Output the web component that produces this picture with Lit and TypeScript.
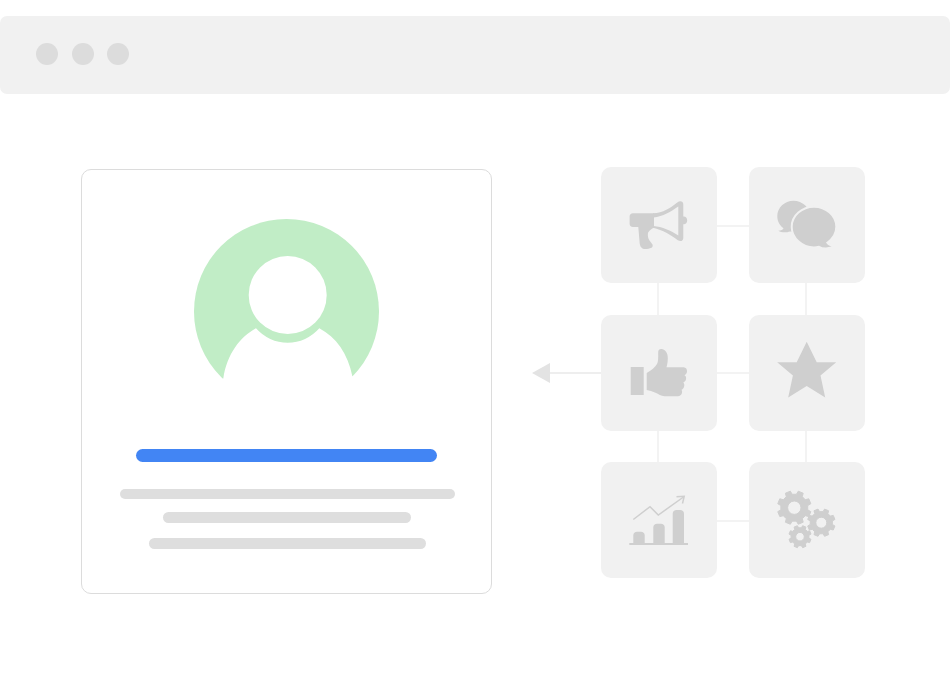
import { LitElement, html, css, svg } from "lit";
import { customElement } from "lit/decorators.js";

function gear(cx: number, cy: number, r: number, hole: number, teeth = 8): string {
  const root = r * 0.8;
  const step = (Math.PI * 2) / teeth;
  const pts: string[] = [];
  for (let i = 0; i < teeth; i++) {
    const a = i * step + step / 2;
    const list: [number, number][] = [
      [root, a - step * 0.3],
      [r, a - step * 0.2],
      [r, a + step * 0.2],
      [root, a + step * 0.3],
    ];
    for (const [rad, ang] of list) {
      pts.push(`${(cx + rad * Math.cos(ang)).toFixed(2)} ${(cy + rad * Math.sin(ang)).toFixed(2)}`);
    }
  }
  const ring = `M${pts.join("L")}Z`;
  const h = `M${cx - hole} ${cy}a${hole} ${hole} 0 1 0 ${hole * 2} 0a${hole} ${hole} 0 1 0 ${-hole * 2} 0Z`;
  return ring + h;
}

const icons = {
  megaphone: svg`
    <path d="M32 46.2H53V60.8C50.5 61.5 48.5 63.5 47 65.8C46.6 69 47 71.5 48.5 73.5L51.5 77.5C52 79 51.5 80 50.5 80.8C47 82.3 43.5 82.5 41.5 81.5C39.8 80.5 39 78.5 38.7 76.5L37.3 60H32C29.8 60 28.6 58.5 28.6 56.5V49.5C28.6 47.5 29.8 46.2 32 46.2Z"/>
    <path fill-rule="evenodd" d="M52 46.2C62 46 69.5 41 76.2 35.5C79 33.2 82.3 34 82.3 37.5V49.6C84.5 49.3 86.2 51 86.2 53.5S84.5 57.6 82.3 57.3V71C82.3 74.2 79.2 75 76.5 73C69.5 68 62 63 52 60.8ZM52.5 50.5V59C61 59.8 70 63.5 77.3 68.5V39.5C70 44.5 62 49.5 52.5 50.5Z"/>`,
  bubbles: svg`
    <path d="M44.5 33.7C35.5 33.7 28.3 40.6 28.3 49.2C28.3 54.5 31 58.7 34.5 61.2C34 62.5 32 63.5 29.3 63.8C32.5 65.8 38 65.5 41 64.4C42.3 64.7 43.4 64.8 44.5 64.8C53.5 64.8 61 57.8 61 49.2C61 40.6 53.5 33.7 44.5 33.7Z"/>
    <path stroke="#f1f1f1" stroke-width="2" d="M65 39.7C53 39.7 42.7 48.5 42.7 59.8C42.7 71 53 80.5 65 80.5C66.8 80.5 68.5 80.2 70 79.8C73.5 82.2 80 82.2 85.5 79.2C81.5 78.6 79.5 77.3 78.3 75.7C83.8 71.8 87.3 66.2 87.3 59.8C87.3 48.5 77 39.7 65 39.7Z"/>`,
  thumb: svg`
    <rect x="29.7" y="52" width="13" height="28"/>
    <path d="M45.7 58C50 55.5 54 52.5 56 49C57.5 46.5 57.2 41 57.2 37C57.2 34.5 59 33.5 61 34C64.5 34.8 66.8 38 66.8 43C66.8 46.5 66.3 49.5 65.5 52.3H82.5C85 52.3 86.2 54.5 86 56.5C85.8 58.3 85 59.5 83.5 60.3C85 61 85.3 62.5 85 64.3C84.7 66 83.5 67 82.3 67.5C83.5 68.5 83.5 70.5 83 72C82.5 73.5 81.5 74.5 80.5 74.8C81.3 76 81.2 77.5 80.8 78.5C80.3 80 79 81 77 81.2H63.5C60 81.2 57.5 79 54.5 77.8C51.5 76.5 48.5 75.5 45.7 75Z"/>`,
  star: svg`<path d="M57.7 26.7L67.7 47.3H87.2L71.5 60.5L76.2 82.5L57.7 71L39.2 82.5L43.9 60.5L28.2 47.3H47.7Z" stroke-linejoin="round"/>`,
  chart: svg`
    <rect x="28.3" y="81" width="58.7" height="2"/>
    <path d="M32.3 81V73C32.3 71 34 69.7 36 69.7H40C42 69.7 43.7 71 43.7 73V81Z"/>
    <path d="M52.3 81V65C52.3 63 54 61.7 56 61.7H60C62 61.7 63.7 63 63.7 65V81Z"/>
    <path d="M71.7 81V51.5C71.7 49.5 73.4 48 75.4 48H79.3C81.3 48 83 49.5 83 51.5V81Z"/>
    <path fill="none" stroke="#cfcfcf" stroke-width="1.5" d="M32.3 57.5L49 44.7L57.3 53L82.5 35"/>
    <path fill="none" stroke="#cfcfcf" stroke-width="1.5" d="M75.5 34.7L83.2 34.3L81.5 41.5"/>`,
  gears: svg`
    <path fill-rule="evenodd" stroke="#cfcfcf" stroke-width="1" stroke-linejoin="round" d=${gear(45.3, 45.7, 17, 6.7)}/>
    <path fill-rule="evenodd" stroke="#cfcfcf" stroke-width="1" stroke-linejoin="round" d=${gear(72.3, 60.7, 14, 5.5)}/>
    <path fill-rule="evenodd" stroke="#cfcfcf" stroke-width="1" stroke-linejoin="round" d=${gear(51, 74.7, 11.3, 4.3)}/>`,
};

@customElement("app-root")
export class AppRoot extends LitElement {
  static styles = css`
    :host { display: block; width: 950px; height: 677px; background: #fff; overflow: hidden; }
    .chrome {
      margin-top: 16px; height: 78px; background: #f1f1f1; border-radius: 7px;
      display: flex; align-items: center; gap: 13.5px; padding: 0 0 2px 36px; box-sizing: border-box;
    }
    .dot { width: 22px; height: 22px; border-radius: 50%; background: #dcdcdc; }
    .main { display: flex; align-items: flex-start; padding: 73px 0 0 81px; }
    .card {
      width: 411px; height: 425px; margin-top: 2px; box-sizing: border-box;
      border: 1px solid #dcdcdc; border-radius: 10px; padding-top: 49px;
      display: flex; flex-direction: column; align-items: center;
    }
    .avatar { display: block; width: 185px; height: 185px; margin-bottom: 45px; }
    .bar { border-radius: 6px; background: #dedede; height: 10.5px; }
    .bar.blue { background: #4285f4; width: 301px; height: 13px; margin-bottom: 26.5px; border-radius: 7px; }
    .b1 { width: 335px; margin: 0 0 13px 1px; }
    .b2 { width: 248px; margin-bottom: 15.5px; }
    .b3 { width: 277px; margin-left: 1px; }
    .net {
      margin-left: 40px; display: grid;
      grid-template-columns: 69px 116px 32px 116px;
      grid-template-rows: 116px 32px 116px 31px 116px;
    }
    .tile { background: #f1f1f1; border-radius: 10px; display: flex; }
    .tile svg { display: block; width: 116px; height: 116px; fill: #cfcfcf; }
    .h { height: 2px; background: #f3f3f3; align-self: center; }
    .h.low { margin-top: 2px; }
    .v { width: 2px; background: #f3f3f3; justify-self: center; margin-right: 2px; }
    .arrow { display: flex; align-items: center; align-self: center; }
    .head {
      width: 0; height: 0; border-style: solid; border-width: 10px 18px 10px 0;
      border-color: transparent #e3e3e3 transparent transparent;
    }
    .shaft { flex: 1; height: 2px; background: #eeeeee; }
    .c1 { grid-column: 1; } .c2 { grid-column: 2; } .c3 { grid-column: 3; } .c4 { grid-column: 4; }
    .r1 { grid-row: 1; } .r2 { grid-row: 2; } .r3 { grid-row: 3; } .r4 { grid-row: 4; } .r5 { grid-row: 5; }
    .ring { fill: #c1edc6; }
    .cut { fill: #fff; }
  `;

  private tile(pos: string, icon: unknown) {
    return html`<div class="tile ${pos}"><svg viewBox="0 0 116 116">${icon}</svg></div>`;
  }

  render() {
    return html`
      <div class="chrome"><span class="dot"></span><span class="dot"></span><span class="dot"></span></div>
      <div class="main">
        <div class="card">
          <svg class="avatar" viewBox="0 0 185 185">
            <circle class="ring" cx="92.5" cy="92.5" r="92.5"/>
            <circle class="cut" cx="93.7" cy="76" r="39"/>
            <path class="cut" d="M29.3 159.5C33 135 46 118 62 109.3A42 42 0 0 0 125.3 109.3C142 118 154 135 158.3 157L185 185H0Z"/>
          </svg>
          <div class="bar blue"></div>
          <div class="bar b1"></div>
          <div class="bar b2"></div>
          <div class="bar b3"></div>
        </div>
        <div class="net">
          ${this.tile("c2 r1", icons.megaphone)}
          <div class="h low c3 r1"></div>
          ${this.tile("c4 r1", icons.bubbles)}
          <div class="v c2 r2"></div>
          <div class="v c4 r2"></div>
          <div class="arrow c1 r3"><span class="head"></span><span class="shaft"></span></div>
          ${this.tile("c2 r3", icons.thumb)}
          <div class="h c3 r3"></div>
          ${this.tile("c4 r3", icons.star)}
          <div class="v c2 r4"></div>
          <div class="v c4 r4"></div>
          ${this.tile("c2 r5", icons.chart)}
          <div class="h low c3 r5"></div>
          ${this.tile("c4 r5", icons.gears)}
        </div>
      </div>
    `;
  }
}
